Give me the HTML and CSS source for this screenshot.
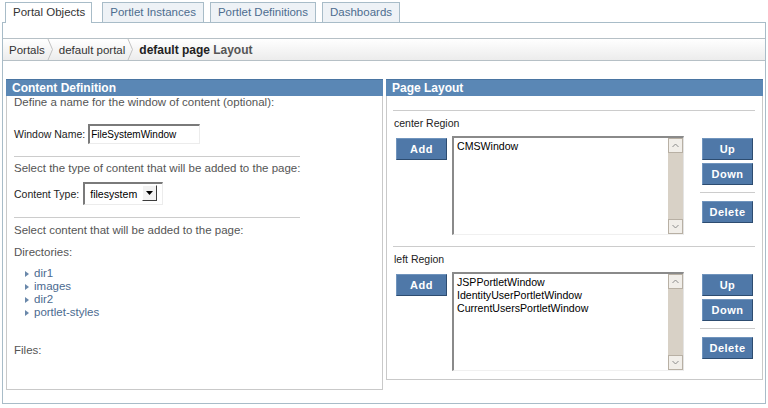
FILE: index.html
```html
<!DOCTYPE html>
<html>
<head>
<meta charset="utf-8">
<title>Portal Admin - Layout</title>
<link rel="stylesheet" href="styles.css">
</head>
<body>
<div class="tabs">
  <div class="tab active">Portal Objects</div>
  <div class="tab">Portlet Instances</div>
  <div class="tab">Portlet Definitions</div>
  <div class="tab">Dashboards</div>
</div>
<div class="box">
  <div class="crumbs">
    <span class="crumb">Portals</span>
    <svg class="sep" viewBox="0 0 7 21"><polyline points="1,0 5.5,10.5 1,21" fill="none" stroke="#c2c2c2" stroke-width="1"/></svg>
    <span class="crumb">default portal</span>
    <svg class="sep" viewBox="0 0 7 21"><polyline points="1,0 5.5,10.5 1,21" fill="none" stroke="#c2c2c2" stroke-width="1"/></svg>
    <span class="crumb current"><b>default page</b> <span class="suffix">Layout</span></span>
  </div>
  <div class="panels">
    <section class="panel">
      <h2 class="ph">Content Definition</h2>
      <div class="pb pb-left">
        <p class="desc">Define a name for the window of content (optional):</p>
        <div class="field name-field">
          <span class="label">Window Name:</span>
          <div class="textbox">FileSystemWindow</div>
        </div>
        <div class="rule rule-a"></div>
        <p class="desc desc-2">Select the type of content that will be added to the page:</p>
        <div class="field type-field">
          <span class="label">Content Type:</span>
          <div class="select">
            <span class="select-text">filesystem</span>
            <span class="select-btn"><svg viewBox="0 0 13 14" width="13" height="14"><polygon points="3,5 10,5 6.5,9" fill="#000"/></svg></span>
          </div>
        </div>
        <div class="rule rule-b"></div>
        <p class="desc desc-3">Select content that will be added to the page:</p>
        <p class="desc desc-dirs">Directories:</p>
        <ul class="dirs">
          <li><a href="#">dir1</a></li>
          <li><a href="#">images</a></li>
          <li><a href="#">dir2</a></li>
          <li><a href="#">portlet-styles</a></li>
        </ul>
        <p class="desc desc-files">Files:</p>
      </div>
    </section>
    <section class="panel">
      <h2 class="ph">Page Layout</h2>
      <div class="pb pb-right">
        <div class="region">
          <div class="rule-full"></div>
          <div class="region-label">center Region</div>
          <div class="region-row">
            <div class="btn btn-add">Add</div>
            <div class="listbox">
              <div class="items">
                <div>CMSWindow</div>
              </div>
              <div class="scrollbar">
                <div class="arrow"><svg viewBox="0 0 13 13" width="13" height="13"><polyline points="3.5,8 6.5,5 9.5,8" fill="none" stroke="#8d8d8d" stroke-width="1"/></svg></div>
                <div class="arrow"><svg viewBox="0 0 13 13" width="13" height="13"><polyline points="3.5,5 6.5,8 9.5,5" fill="none" stroke="#8d8d8d" stroke-width="1"/></svg></div>
              </div>
            </div>
            <div class="btn-col">
              <div class="btn btn-up">Up</div>
              <div class="btn btn-down">Down</div>
              <div class="col-rule"></div>
              <div class="btn btn-del">Delete</div>
            </div>
          </div>
        </div>
        <div class="region">
          <div class="rule-full"></div>
          <div class="region-label">left Region</div>
          <div class="region-row">
            <div class="btn btn-add">Add</div>
            <div class="listbox">
              <div class="items">
                <div>JSPPortletWindow</div>
                <div>IdentityUserPortletWindow</div>
                <div>CurrentUsersPortletWindow</div>
              </div>
              <div class="scrollbar">
                <div class="arrow"><svg viewBox="0 0 13 13" width="13" height="13"><polyline points="3.5,8 6.5,5 9.5,8" fill="none" stroke="#8d8d8d" stroke-width="1"/></svg></div>
                <div class="arrow"><svg viewBox="0 0 13 13" width="13" height="13"><polyline points="3.5,5 6.5,8 9.5,5" fill="none" stroke="#8d8d8d" stroke-width="1"/></svg></div>
              </div>
            </div>
            <div class="btn-col">
              <div class="btn btn-up">Up</div>
              <div class="btn btn-down">Down</div>
              <div class="col-rule"></div>
              <div class="btn btn-del">Delete</div>
            </div>
          </div>
        </div>
      </div>
    </section>
  </div>
</div>
</body>
</html>
```
FILE: styles.css
```css
* { box-sizing: border-box; }

body {
  margin: 0;
  background: #fff;
  color: #333;
  font-family: "Liberation Sans", Arial, sans-serif;
  font-size: 11.5px;
}

/* Tabs */
.tabs {
  display: flex;
  align-items: flex-end;
  height: 22px;
  padding: 2px 0 0 5px;
}
.tab {
  height: 20px;
  padding: 0 7px;
  margin-right: 6px;
  border: 1px solid #a8bcc8;
  border-bottom: none;
  background: #eef2f6;
  color: #4d6d8f;
  line-height: 19px;
  white-space: nowrap;
}
.tab.active {
  position: relative;
  z-index: 1;
  height: 21px;
  margin-bottom: -1px;
  margin-right: 10px;
  padding: 0 6px 0 7px;
  background: #fff;
  color: #333;
}

/* Outer box */
.box {
  height: 382px;
  margin: 0 2px;
  padding-top: 15px;
  border: 1px solid #a8bcc8;
}

/* Breadcrumbs */
.crumbs {
  display: flex;
  align-items: center;
  height: 23px;
  padding-left: 6px;
  border-top: 1px solid #b6c0c6;
  border-bottom: 1px solid #b6c0c6;
  background: linear-gradient(#ffffff, #ececec);
  color: #333;
  white-space: nowrap;
}
.sep {
  width: 7px;
  height: 21px;
  margin: 0 5px 0 2px;
}
.crumb.current b { color: #222; font-size: 12px; }
.crumb.current .suffix { color: #555; font-weight: bold; font-size: 12px; }

/* Panels */
.panels {
  display: flex;
  align-items: flex-start;
  gap: 3px;
  margin-top: 18px;
  padding: 0 2px 0 3px;
}
.panel {
  flex: 1;
  min-width: 0;
  border: 1px solid #c9c9c9;
  border-top: none;
}
.ph {
  height: 17px;
  margin: 0 -1px;
  padding-left: 6px;
  border-top: 1px solid #4a75a2;
  background: #5a87b5;
  color: #fff;
  font-size: 12px;
  font-weight: bold;
  line-height: 16px;
}

/* Left panel */
.pb-left { padding: 0 0 33px 7px; }
.desc {
  margin: 0;
  color: #555;
  line-height: 12px;
  white-space: nowrap;
}
.field {
  display: flex;
  align-items: center;
  gap: 3px;
}
.label {
  color: #222;
  font-size: 10.5px;
}
.name-field { margin-top: 16px; }
.textbox {
  width: 112px;
  height: 20px;
  padding-left: 1px;
  border-style: solid;
  border-width: 2px 1px 1px 2px;
  border-color: #7a7a7a #ececec #ececec #7a7a7a;
  color: #000;
  font-size: 10px;
  line-height: 17px;
}
.rule {
  width: 286px;
  height: 0;
  border-top: 1px solid #cccccc;
}
.rule-a { margin-top: 12px; }
.desc-2 { margin-top: 5px; }
.type-field { margin-top: 8px; gap: 4px; }
.select {
  display: flex;
  width: 80px;
  height: 23px;
  padding-left: 5px;
  border-style: solid;
  border-width: 2px 1px 1px 2px;
  border-color: #7a7a7a #ececec #ececec #7a7a7a;
  color: #000;
  font-size: 10.6px;
}
.select-text { line-height: 20px; }
.select-btn {
  display: flex;
  width: 15px;
  height: 16px;
  margin: 1px 5px 0 auto;
  border-style: solid;
  border-width: 1px;
  border-color: #ffffff #3c3c3c #3c3c3c #ffffff;
  background: #f2f2f2;
}
.rule-b { margin-top: 12px; }
.desc-3 { margin-top: 6px; }
.desc-dirs { margin-top: 10px; }
.dirs {
  margin: 9px 0 0;
  padding: 0 0 0 11px;
  list-style: none;
}
.dirs li {
  display: flex;
  align-items: center;
  height: 13px;
  line-height: 13px;
}
.dirs li::before {
  content: "";
  width: 0;
  height: 0;
  margin-right: 5px;
  border-left: 4px solid #6a88aa;
  border-top: 3px solid transparent;
  border-bottom: 3px solid transparent;
}
.dirs a {
  color: #4b6a90;
  text-decoration: none;
}
.desc-files { margin-top: 25px; }

/* Right panel */
.pb-right { padding: 14px 7px 8px 6px; }
.region + .region { margin-top: 11px; }
.rule-full {
  height: 0;
  border-top: 1px solid #cccccc;
}
.region-label {
  margin-top: 5px;
  padding-left: 1px;
  color: #222;
  font-size: 10.5px;
  line-height: 14px;
}
.region-row {
  display: flex;
  align-items: flex-start;
  margin-top: 6px;
}
.btn {
  width: 51px;
  height: 22px;
  border-style: solid;
  border-width: 1px;
  border-color: #7094bd #2d4c70 #2d4c70 #7094bd;
  background: #4f78a8;
  color: #fff;
  font-size: 11px;
  font-weight: bold;
  letter-spacing: 0.5px;
  line-height: 20px;
  text-align: center;
}
.btn-add { margin: 2px 0 0 3px; }
.listbox {
  display: flex;
  width: 232px;
  height: 99px;
  margin-left: 5px;
  border-style: solid;
  border-width: 2px 1px 1px 2px;
  border-color: #8a8a8a #e4e4e4 #f0f0f0 #8a8a8a;
  background: #fff;
}
.items {
  flex: 1;
  padding: 2px 3px;
  color: #000;
  font-size: 10.6px;
  line-height: 13px;
  white-space: nowrap;
}
.scrollbar {
  display: flex;
  flex-direction: column;
  justify-content: space-between;
  width: 15px;
  background: #d8d1c6;
}
.arrow {
  display: flex;
  width: 15px;
  height: 15px;
  border: 1px solid #b8b0a4;
  background: #f1eee9;
}
.btn-col {
  width: 55px;
  margin-left: 16px;
}
.btn-col .btn { margin-left: 2px; }
.btn-up { margin-top: 2px; }
.btn-down { margin-top: 3px; }
.col-rule {
  margin-top: 7px;
  border-top: 1px solid #cccccc;
}
.btn-del { margin-top: 8px; }
```
